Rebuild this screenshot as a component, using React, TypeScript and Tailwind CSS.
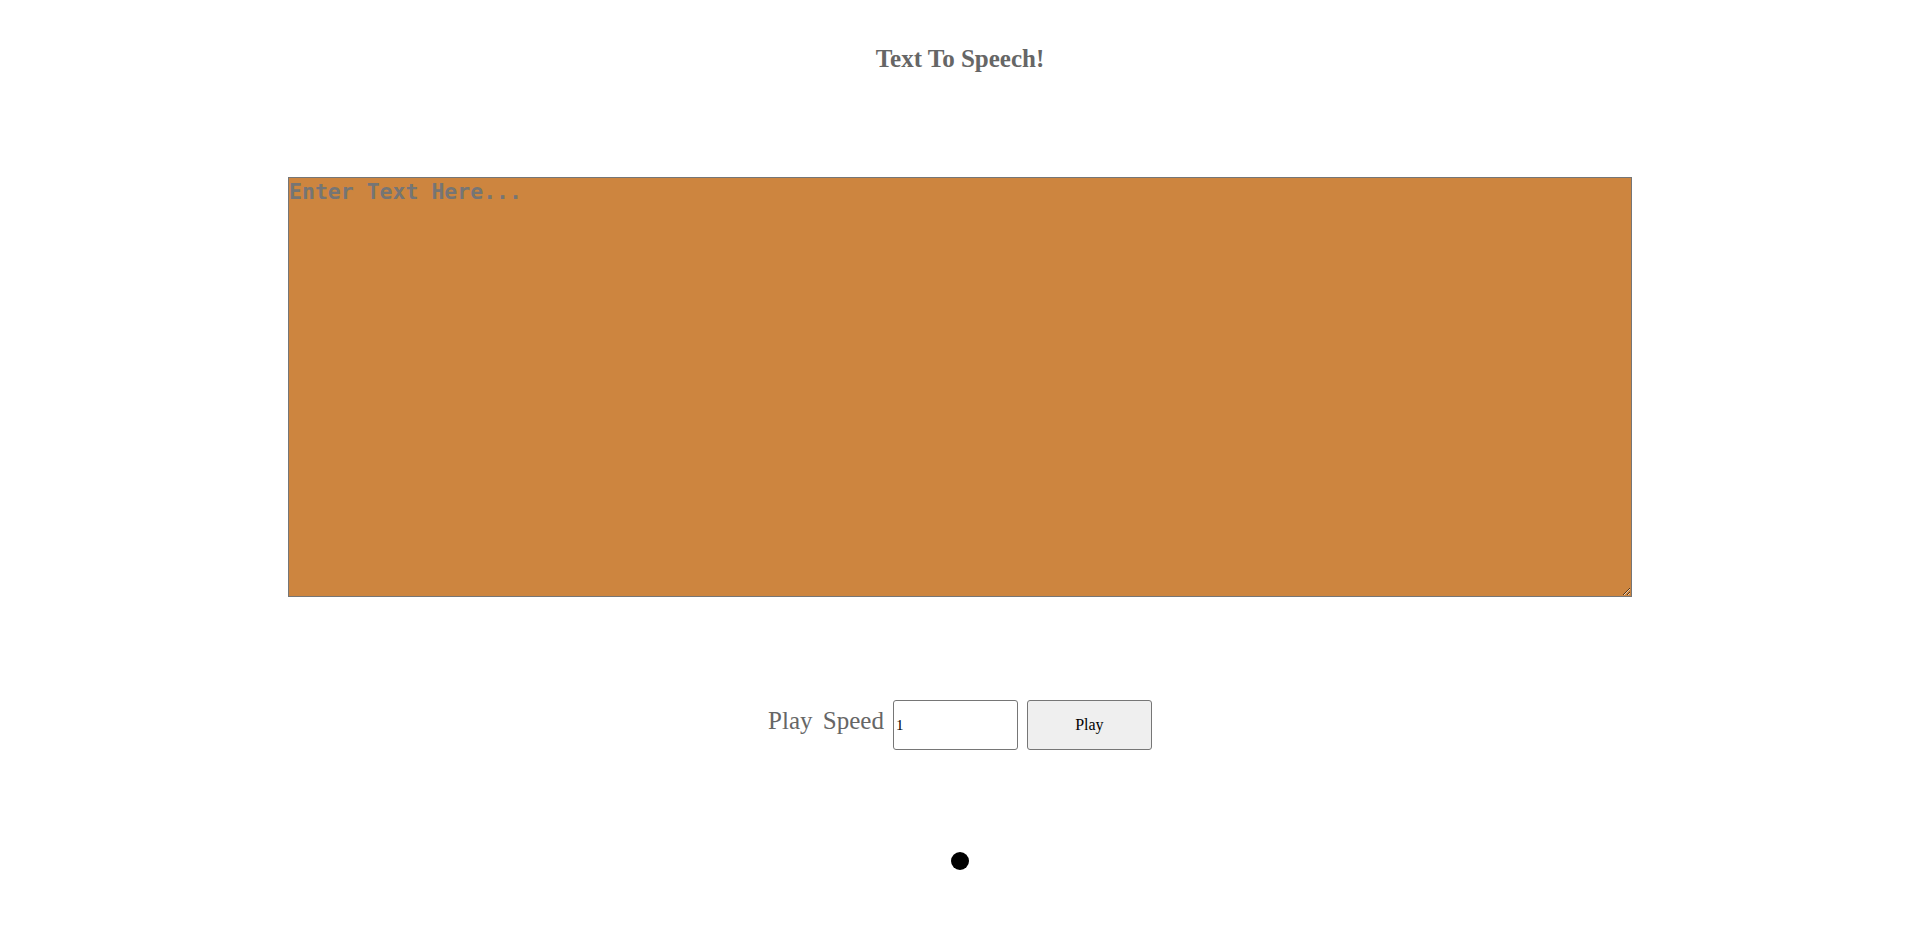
import { useState } from "react";

export default function App() {
  const [text, setText] = useState("");
  const [speed, setSpeed] = useState("1");

  const serif = "font-['Liberation_Serif','Times_New_Roman',serif]";

  return (
    <div className="min-h-[926px] w-full bg-white flex flex-col items-center">
      <h2
        className={`${serif} mt-[45px] text-[25px] leading-[28px] font-bold text-[#666666]`}
      >
        Text To Speech!
      </h2>

      <textarea
        value={text}
        onChange={(e) => setText(e.target.value)}
        placeholder="Enter Text Here..."
        className="mt-[104px] w-[1344px] h-[420px] bg-[#cd853f] border border-[#767676] py-[2px] pl-0 pr-[2px] font-['DejaVu_Sans_Mono',monospace] text-[21.5px] leading-[24px] font-bold text-[#333] placeholder:text-[#757575] outline-none"
      />

      <div className="mt-[103px] flex items-start">
        <label
          className={`${serif} mt-[7px] text-[25px] leading-[28px] text-[#666666] [word-spacing:4px]`}
        >
          Play Speed
        </label>
        <input
          type="text"
          value={speed}
          onChange={(e) => setSpeed(e.target.value)}
          className={`${serif} ml-[9px] w-[125px] h-[50px] border border-[#767676] rounded-[3px] px-[2px] text-[15px] text-black bg-white outline-none`}
        />
        <button
          type="button"
          className={`${serif} ml-[9px] w-[125px] h-[50px] border border-[#767676] rounded-[3px] bg-[#efefef] text-[16px] text-black`}
        >
          Play
        </button>
      </div>

      <div className="mt-[102px] w-[18px] h-[18px] rounded-full bg-black" />
    </div>
  );
}
